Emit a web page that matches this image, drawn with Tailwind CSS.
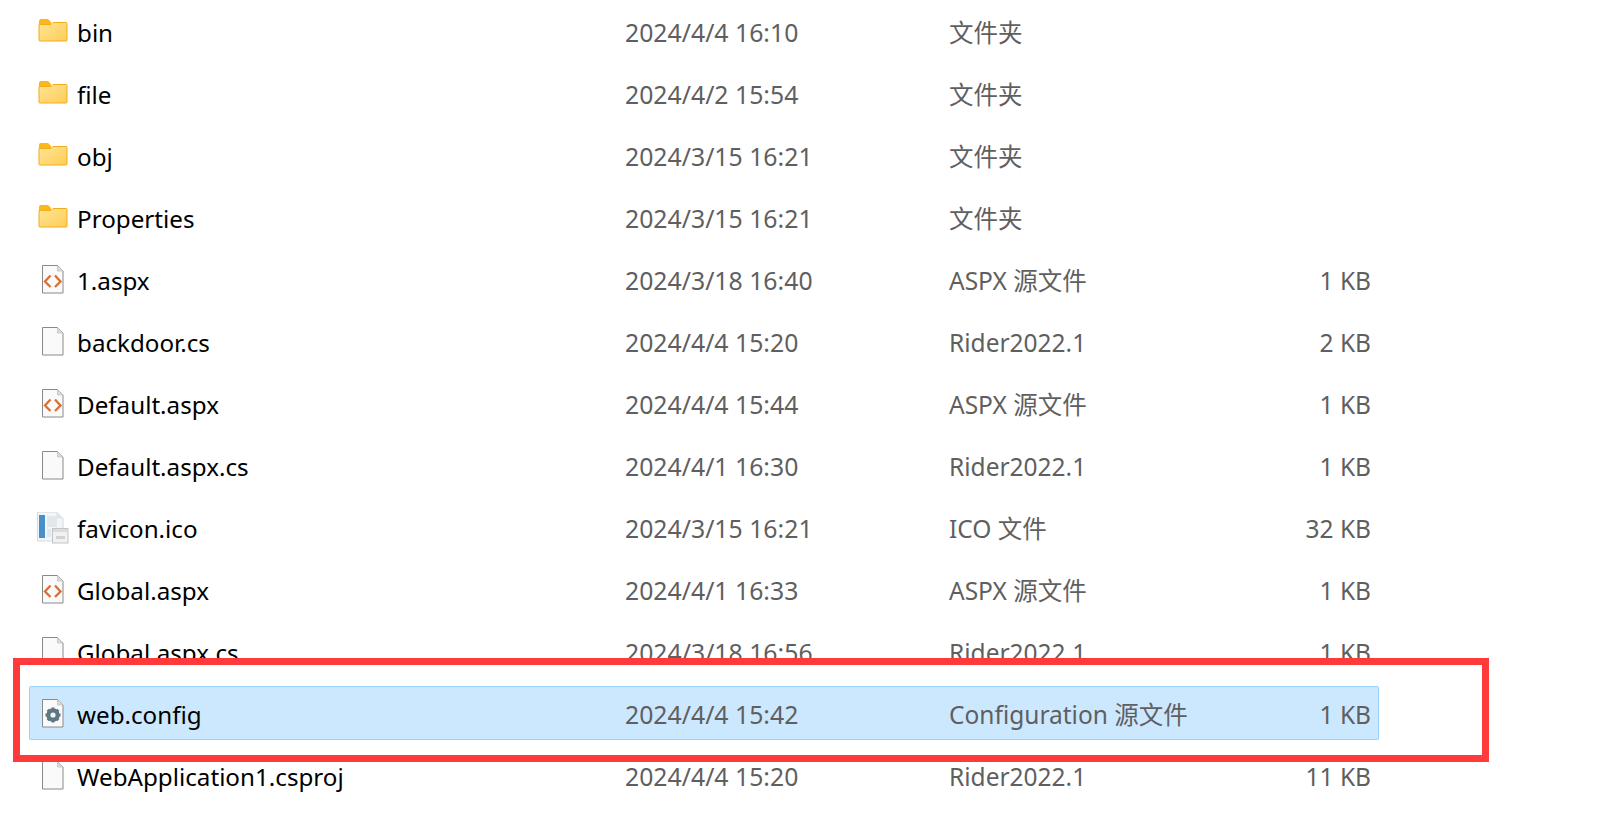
<!DOCTYPE html>
<html lang="en">
<head>
  <meta charset="UTF-8">
  <title>web.config</title>
  <script src="https://cdn.jsdelivr.net/npm/@tailwindcss/browser@4"></script>
</head>
<body class="bg-white overflow-hidden font-['Noto_Sans','Noto_Sans_CJK_SC',sans-serif] text-[24.5px] text-black">
  <svg class="absolute w-0 h-0">
    <defs>
      <linearGradient id="folderFill" x1="0" y1="0" x2="1" y2="1">
        <stop offset="0" stop-color="#ffe596"/>
        <stop offset="1" stop-color="#fdcd56"/>
      </linearGradient>
    </defs>
    <symbol id="folder" viewBox="0 0 32 32">
      <path d="M2 5a2 2 0 0 1 2-2h7l3 3v3H2z" fill="#fdb817"/>
      <path d="M2 8.500h12l2-2h13a1 1 0 0 1 1 1V24a1 1 0 0 1-1 1H3a1 1 0 0 1-1-1z" fill="url(#folderFill)" stroke="#f3ac1c" stroke-width="1"/>
    </symbol>
    <symbol id="file" viewBox="0 0 32 32">
      <path d="M5.500 1.500h15l5.500 5.500v22H5.500z" fill="#fafafa" stroke="#8a8a8a"/>
      <path d="M20.500 1.500v5.500H26z" fill="#dcdcdc" stroke="#b5b5b5" stroke-width="0.600"/>
    </symbol>
    <symbol id="code" viewBox="0 0 32 32">
      <use href="#file"/>
      <path d="M13.500 11.500L8 17.500l5.500 5.500M18 11.500l5.500 6-5.500 5.500" fill="none" stroke="#d4713a" stroke-width="2.300"/>
    </symbol>
    <symbol id="config" viewBox="0 0 32 32">
      <use href="#file"/>
      <circle cx="16" cy="17" r="5" fill="none" stroke="#5f7782" stroke-width="3.400"/>
      <path d="M16 9.500v15M8.500 17h15M10.700 11.700l10.600 10.600M21.300 11.700l-10.600 10.600" stroke="#5f7782" stroke-width="3"/>
      <circle cx="16" cy="17" r="2.600" fill="#f5f5f5"/>
    </symbol>
    <symbol id="image" viewBox="0 0 32 32">
      <path d="M0.500 0h19l6.500 6.500V29H0.500z" fill="#f3f6f8" stroke="#d5dade"/>
      <path d="M19.500 0v6.500H26z" fill="#dfe3e6"/>
      <rect x="2" y="3" width="6" height="23" fill="#4a90c8"/>
      <rect x="10" y="4" width="10" height="11" fill="#e2e7eb"/>
      <rect x="10" y="17" width="4" height="8" fill="#e2e7eb"/>
      <rect x="15.500" y="16.500" width="15.500" height="14.500" fill="#f1f1f1" stroke="#c4c4c4"/>
      <rect x="16" y="17" width="14.500" height="3" fill="#dcdcdc"/>
      <rect x="19" y="24" width="9" height="3" fill="#d3d3d3"/>
    </symbol>
  </svg>

  <main class="pt-px">
    <div class="h-[62px] pt-[2px] pl-[37px] grid grid-cols-[40px_548px_324px_300px_122px] items-center">
      <svg class="w-8 h-8 mb-[2px]"><use href="#folder"/></svg>
      <span class="text-[24.2px]">bin</span><span class="text-[24.8px] text-[#5f5f5f]">2024/4/4 16:10</span><span class="text-[#5f5f5f]">文件夹</span><span></span>
    </div>
    <div class="h-[62px] pt-[2px] pl-[37px] grid grid-cols-[40px_548px_324px_300px_122px] items-center">
      <svg class="w-8 h-8 mb-[2px]"><use href="#folder"/></svg>
      <span class="text-[24.2px]">file</span><span class="text-[24.8px] text-[#5f5f5f]">2024/4/2 15:54</span><span class="text-[#5f5f5f]">文件夹</span><span></span>
    </div>
    <div class="h-[62px] pt-[2px] pl-[37px] grid grid-cols-[40px_548px_324px_300px_122px] items-center">
      <svg class="w-8 h-8 mb-[2px]"><use href="#folder"/></svg>
      <span class="text-[24.2px]">obj</span><span class="text-[24.8px] text-[#5f5f5f]">2024/3/15 16:21</span><span class="text-[#5f5f5f]">文件夹</span><span></span>
    </div>
    <div class="h-[62px] pt-[2px] pl-[37px] grid grid-cols-[40px_548px_324px_300px_122px] items-center">
      <svg class="w-8 h-8 mb-[2px]"><use href="#folder"/></svg>
      <span class="text-[24.2px]">Properties</span><span class="text-[24.8px] text-[#5f5f5f]">2024/3/15 16:21</span><span class="text-[#5f5f5f]">文件夹</span><span></span>
    </div>
    <div class="h-[62px] pt-[2px] pl-[37px] grid grid-cols-[40px_548px_324px_300px_122px] items-center">
      <svg class="w-8 h-8 mb-[2px]"><use href="#code"/></svg>
      <span class="text-[24.2px]">1.aspx</span><span class="text-[24.8px] text-[#5f5f5f]">2024/3/18 16:40</span><span class="text-[#5f5f5f]">ASPX 源文件</span><span class="text-[#5f5f5f] text-right">1 KB</span>
    </div>
    <div class="h-[62px] pt-[2px] pl-[37px] grid grid-cols-[40px_548px_324px_300px_122px] items-center">
      <svg class="w-8 h-8 mb-[2px]"><use href="#file"/></svg>
      <span class="text-[24.2px]">backdoor.cs</span><span class="text-[24.8px] text-[#5f5f5f]">2024/4/4 15:20</span><span class="text-[#5f5f5f]">Rider2022.1</span><span class="text-[#5f5f5f] text-right">2 KB</span>
    </div>
    <div class="h-[62px] pt-[2px] pl-[37px] grid grid-cols-[40px_548px_324px_300px_122px] items-center">
      <svg class="w-8 h-8 mb-[2px]"><use href="#code"/></svg>
      <span class="text-[24.2px]">Default.aspx</span><span class="text-[24.8px] text-[#5f5f5f]">2024/4/4 15:44</span><span class="text-[#5f5f5f]">ASPX 源文件</span><span class="text-[#5f5f5f] text-right">1 KB</span>
    </div>
    <div class="h-[62px] pt-[2px] pl-[37px] grid grid-cols-[40px_548px_324px_300px_122px] items-center">
      <svg class="w-8 h-8 mb-[2px]"><use href="#file"/></svg>
      <span class="text-[24.2px]">Default.aspx.cs</span><span class="text-[24.8px] text-[#5f5f5f]">2024/4/1 16:30</span><span class="text-[#5f5f5f]">Rider2022.1</span><span class="text-[#5f5f5f] text-right">1 KB</span>
    </div>
    <div class="h-[62px] pt-[2px] pl-[37px] grid grid-cols-[40px_548px_324px_300px_122px] items-center">
      <svg class="w-8 h-8 mb-[2px]"><use href="#image"/></svg>
      <span class="text-[24.2px]">favicon.ico</span><span class="text-[24.8px] text-[#5f5f5f]">2024/3/15 16:21</span><span class="text-[#5f5f5f]">ICO 文件</span><span class="text-[#5f5f5f] text-right">32 KB</span>
    </div>
    <div class="h-[62px] pt-[2px] pl-[37px] grid grid-cols-[40px_548px_324px_300px_122px] items-center">
      <svg class="w-8 h-8 mb-[2px]"><use href="#code"/></svg>
      <span class="text-[24.2px]">Global.aspx</span><span class="text-[24.8px] text-[#5f5f5f]">2024/4/1 16:33</span><span class="text-[#5f5f5f]">ASPX 源文件</span><span class="text-[#5f5f5f] text-right">1 KB</span>
    </div>
    <div class="h-[62px] pt-[2px] pl-[37px] grid grid-cols-[40px_548px_324px_300px_122px] items-center">
      <svg class="w-8 h-8 mb-[2px]"><use href="#file"/></svg>
      <span class="text-[24.2px]">Global.aspx.cs</span><span class="text-[24.8px] text-[#5f5f5f]">2024/3/18 16:56</span><span class="text-[#5f5f5f]">Rider2022.1</span><span class="text-[#5f5f5f] text-right">1 KB</span>
    </div>

    <!-- red highlight, covers the rows above and below it -->
    <div class="relative z-10 bg-white ml-[13px] w-[1476px] h-[104px] -mt-[25px] -mb-[17px] border-[7px] border-[#ff3a3a] pt-[21px] pl-[9px]">
      <div class="w-[1350px] h-[54px] pt-[4px] pl-[7px] grid grid-cols-[40px_548px_324px_300px_122px] items-center bg-[#cce8ff] border border-[#99d1ff] rounded-[2px]">
        <svg class="w-8 h-8 mb-[2px]"><use href="#config"/></svg>
        <span class="text-[24.2px]">web.config</span><span class="text-[24.8px] text-[#5f5f5f]">2024/4/4 15:42</span><span class="text-[#5f5f5f]">Configuration 源文件</span><span class="text-[#5f5f5f] text-right">1 KB</span>
      </div>
    </div>

    <div class="h-[62px] pt-[2px] pl-[37px] grid grid-cols-[40px_548px_324px_300px_122px] items-center">
      <svg class="w-8 h-8 mb-[2px]"><use href="#file"/></svg>
      <span class="text-[24.2px]">WebApplication1.csproj</span><span class="text-[24.8px] text-[#5f5f5f]">2024/4/4 15:20</span><span class="text-[#5f5f5f]">Rider2022.1</span><span class="text-[#5f5f5f] text-right">11 KB</span>
    </div>
  </main>
</body>
</html>
